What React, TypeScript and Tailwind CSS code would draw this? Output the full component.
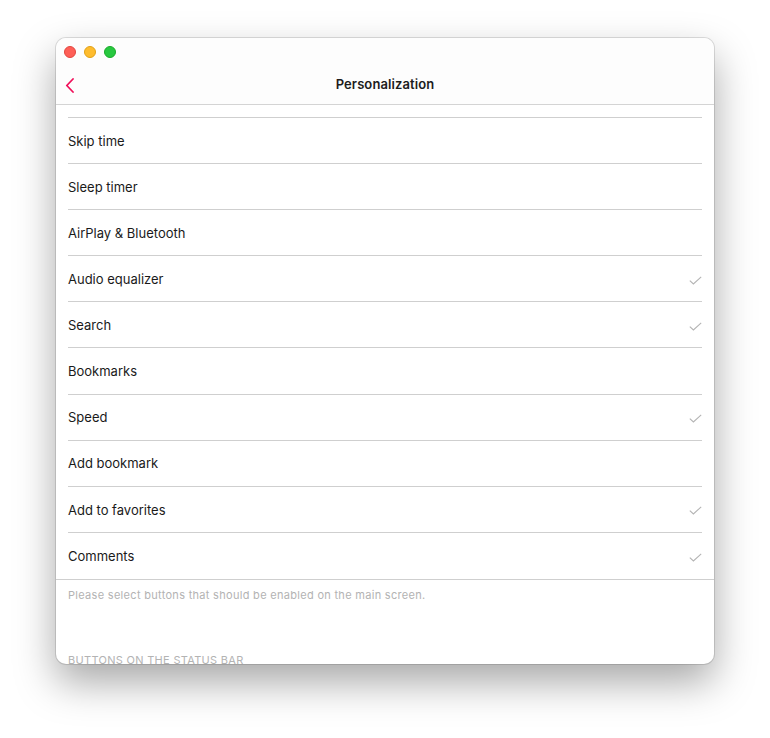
import React from "react";

const rows: { label: string; checked: boolean }[] = [
    { label: "Skip time", checked: false },
    { label: "Sleep timer", checked: false },
    { label: "AirPlay & Bluetooth", checked: false },
    { label: "Audio equalizer", checked: true },
    { label: "Search", checked: true },
    { label: "Bookmarks", checked: false },
    { label: "Speed", checked: true },
    { label: "Add bookmark", checked: false },
    { label: "Add to favorites", checked: true },
    { label: "Comments", checked: true },
];

const Check = () => (
    <svg className="mt-[3px]" width="13" height="9" viewBox="0 0 13 9" fill="none">
        <polyline points="0.8,4.6 4.4,8 12.2,0.8" stroke="#b4b4b4" strokeWidth="1.1" />
    </svg>
);

const App: React.FC = () => {
    return (
        <div className="w-[770px] h-[738px] bg-white pt-[38px] pl-[56px]" style={{ fontFamily: "Inter, 'Noto Sans', sans-serif" }}>
            <div className="w-[658px] h-[626px] rounded-[10px] bg-white overflow-hidden flex flex-col shadow-[0_18px_40px_rgba(0,0,0,0.35),0_0_0_1px_rgba(0,0,0,0.12)]">
                {/* title bar */}
                <div className="h-[67px] shrink-0 border-b border-[#d4d4d4] bg-[#fdfdfd] flex flex-col">
                    <div className="flex gap-2 pl-[8px] pt-[8px]">
                        <span className="w-3 h-3 rounded-full bg-[#fe5f57] border border-[#e2463f]" />
                        <span className="w-3 h-3 rounded-full bg-[#febc2e] border border-[#e1a116]" />
                        <span className="w-3 h-3 rounded-full bg-[#28c840] border border-[#1aab29]" />
                    </div>
                    <div className="relative flex items-center justify-center h-[26px] mt-[14px]">
                        <svg className="absolute left-[9px] top-[6px]" width="10" height="15" viewBox="0 0 10 15" fill="none">
                            <polyline points="8,1 1.8,7.5 8,14" stroke="#f0105a" strokeWidth="1.8" strokeLinecap="round" strokeLinejoin="round" />
                        </svg>
                        <span className="text-[13px] font-semibold tracking-[0.1px] text-[#1c1c1c]">Personalization</span>
                    </div>
                </div>

                {/* list */}
                <div className="pt-[12px]">
                    <div className="mx-3 border-t border-[#cfcfcf]">
                        {rows.map((row, i) => (
                            <div
                                key={row.label}
                                className={`h-[46.1px] flex items-center justify-between ${i < rows.length - 1 ? "border-b border-[#cfcfcf]" : ""}`}
                            >
                                <span className="pt-[2px] text-[13px] text-[#1a1a1a]">{row.label}</span>
                                {row.checked && <Check />}
                            </div>
                        ))}
                    </div>
                    <div className="border-t border-[#cfcfcf] px-3 pt-[7px]">
                        <p className="text-[11px] tracking-[0.3px] text-[#b3b3b3]">Please select buttons that should be enabled on the main screen.</p>
                        <p className="text-[11px] tracking-[0.3px] text-[#b3b3b3] uppercase mt-[49px]">Buttons on the status bar</p>
                    </div>
                </div>
            </div>
        </div>
    );
};

export default App;
